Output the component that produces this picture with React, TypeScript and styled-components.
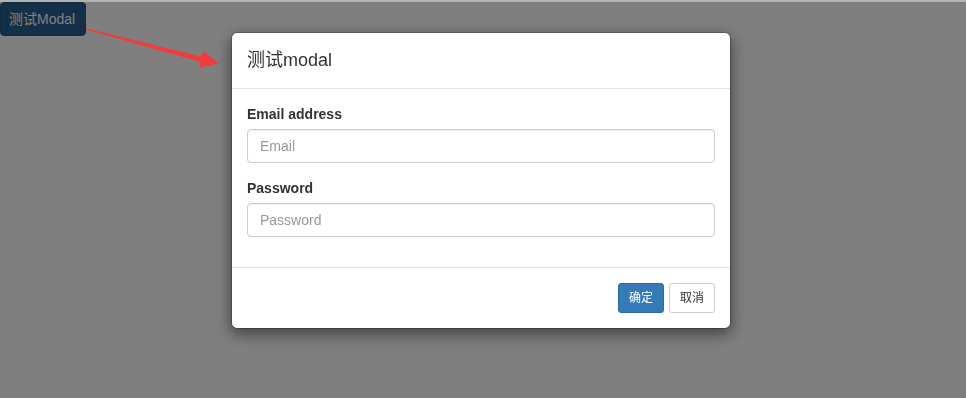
import React from "react";
import styled, { createGlobalStyle } from "styled-components";

const Global = createGlobalStyle`
  html, body { margin: 0; padding: 0; }
  body {
    background: #fff;
    font-family: "Liberation Sans", Arial, "Noto Sans CJK SC", sans-serif;
    font-size: 14px;
    line-height: 1.42857143;
    color: #333;
    border-top: 2px solid #b4b4b4;
  }
  * { box-sizing: border-box; }
`;

const Page = styled.div`
  height: 396px;
`;

const TriggerButton = styled.button`
  display: inline-block;
  font-family: "Liberation Sans", Arial, "Noto Sans CJK SC", sans-serif;
  font-size: 14px;
  line-height: 1.42857143;
  padding: 6px 10px 6px 8px;
  color: #fff;
  background: #285f91;
  border: 1px solid #245682;
  border-radius: 4px;
  cursor: pointer;
`;

const PrimaryButton = styled.button`
  display: inline-block;
  font-family: "Liberation Sans", Arial, "Noto Sans CJK SC", sans-serif;
  font-size: 12px;
  line-height: 1.5;
  padding: 5px 10px;
  color: #fff;
  background: #337ab7;
  border: 1px solid #2e6da4;
  border-radius: 3px;
  cursor: pointer;
`;

const DefaultButton = styled.button`
  display: inline-block;
  font-family: "Liberation Sans", Arial, "Noto Sans CJK SC", sans-serif;
  font-size: 12px;
  line-height: 1.5;
  padding: 5px 10px;
  color: #333;
  background: #fff;
  border: 1px solid #ccc;
  border-radius: 3px;
  cursor: pointer;
`;

const Backdrop = styled.div`
  position: fixed;
  top: 2px;
  left: 0;
  right: 0;
  bottom: 0;
  background: rgba(0, 0, 0, 0.5);
`;

const ModalLayer = styled.div`
  position: fixed;
  top: 0;
  left: 0;
  right: 0;
  bottom: 0;
  display: flex;
  align-items: flex-start;
`;

const Dialog = styled.div`
  margin: 32px 0 0 231px;
  width: 500px;
  background: #fff;
  border: 1px solid rgba(0, 0, 0, 0.2);
  border-radius: 6px;
  box-shadow: 0 5px 15px rgba(0, 0, 0, 0.5);
  background-clip: padding-box;
`;

const Header = styled.div`
  padding: 15px;
  border-bottom: 1px solid #e5e5e5;
`;

const Title = styled.h4`
  margin: 0;
  font-size: 18px;
  font-weight: 400;
  line-height: 25px;
  color: #333;
`;

const Body = styled.div`
  padding: 15px;
`;

const FormGroup = styled.div`
  margin-bottom: 15px;
`;

const Label = styled.label`
  display: block;
  margin-bottom: 5px;
  font-weight: 700;
  font-size: 14px;
  line-height: 20px;
`;

const Input = styled.input`
  display: block;
  width: 100%;
  height: 34px;
  padding: 6px 12px;
  font-family: "Liberation Sans", Arial, sans-serif;
  font-size: 14px;
  line-height: 1.42857143;
  color: #555;
  background: #fff;
  border: 1px solid #ccc;
  border-radius: 4px;
  box-shadow: inset 0 1px 1px rgba(0, 0, 0, 0.075);
  outline: none;
  &::placeholder { color: #999; }
`;

const Footer = styled.div`
  padding: 15px;
  border-top: 1px solid #e5e5e5;
  display: flex;
  justify-content: flex-end;
  gap: 5px;
`;

const ArrowSvg = styled.svg`
  position: fixed;
  top: 0;
  left: 0;
  pointer-events: none;
`;

export default function App() {
  return (
    <>
      <Global />
      <Page>
        <TriggerButton>测试Modal</TriggerButton>
      </Page>
      <Backdrop />
      <ModalLayer>
        <Dialog>
          <Header>
            <Title>测试modal</Title>
          </Header>
          <Body>
            <FormGroup>
              <Label>Email address</Label>
              <Input type="email" placeholder="Email" />
            </FormGroup>
            <FormGroup>
              <Label>Password</Label>
              <Input type="password" placeholder="Password" />
            </FormGroup>
          </Body>
          <Footer>
            <PrimaryButton>确定</PrimaryButton>
            <DefaultButton>取消</DefaultButton>
          </Footer>
        </Dialog>
      </ModalLayer>
      <ArrowSvg width="240" height="80" viewBox="0 0 240 80">
        <polygon
          points="86,28.3 201,56.5 204,51.5 219,63.5 200,67.5 199.5,61.5 86,29.7"
          fill="#f23b3b"
        />
      </ArrowSvg>
    </>
  );
}
